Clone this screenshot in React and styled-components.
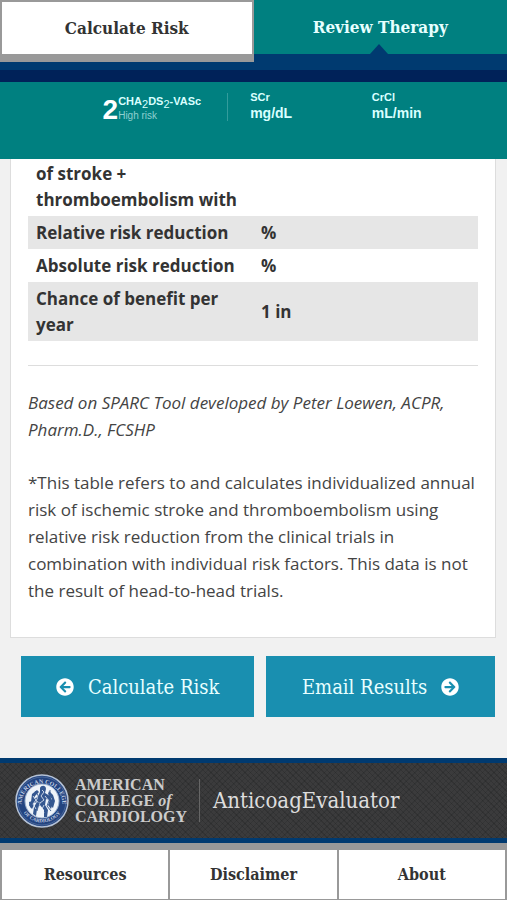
import React from "react";
import styled, { createGlobalStyle } from "styled-components";
import { FaArrowCircleLeft, FaArrowCircleRight } from "react-icons/fa";

const rows = [
  { label: "of stroke + thromboembolism with", value: "" },
  { label: "Relative risk reduction", value: "%" },
  { label: "Absolute risk reduction", value: "%" },
  { label: "Chance of benefit per year", value: "1 in" }
];

const links = ["Resources", "Disclaimer", "About"];

export default function App() {
  return (
    <Page>
      <GlobalStyle />
      <header>
        <Tabs>
          <Tab type="button">Calculate Risk</Tab>
          <Tab type="button" $active>Review Therapy</Tab>
        </Tabs>
        <Stripe />
        <Summary>
          <Score>
            <strong>2</strong>
            <div>
              <h2>CHA<sub>2</sub>DS<sub>2</sub>-VASc</h2>
              <p>High risk</p>
            </div>
          </Score>
          <Measure>
            <h2>SCr</h2>
            <p>mg/dL</p>
          </Measure>
          <Measure>
            <h2>CrCl</h2>
            <p>mL/min</p>
          </Measure>
        </Summary>
      </header>

      <Main>
        <Card>
          <RiskTable>
            <tbody>
              {rows.map((row) => (
                <tr key={row.label}>
                  <th scope="row">{row.label}</th>
                  <td>{row.value}</td>
                </tr>
              ))}
            </tbody>
          </RiskTable>
          <Divider />
          <Note>
            <em>Based on SPARC Tool developed by Peter Loewen, ACPR, Pharm.D., FCSHP</em>
          </Note>
          <Note>
            *This table refers to and calculates individualized annual risk of ischemic
            stroke and thromboembolism using relative risk reduction from the clinical
            trials in combination with individual risk factors. This data is not the
            result of head-to-head trials.
          </Note>
        </Card>
        <Actions>
          <Action type="button">
            <FaArrowCircleLeft size={18} />
            Calculate Risk
          </Action>
          <Action type="button">
            Email Results
            <FaArrowCircleRight size={18} />
          </Action>
        </Actions>
      </Main>

      <footer>
        <Brand>
          <Seal />
          <College>
            AMERICAN<br />
            COLLEGE <em>of</em><br />
            CARDIOLOGY
          </College>
          <AppName>AnticoagEvaluator</AppName>
        </Brand>
        <FooterNav>
          {links.map((link) => (
            <a href="#" key={link}>{link}</a>
          ))}
        </FooterNav>
      </footer>
    </Page>
  );
}

function Seal() {
  return (
    <SealSvg viewBox="0 0 54 54" aria-label="American College of Cardiology seal">
      <defs>
        <path id="sealTop" d="M6.5 30 A20.5 20.5 0 1 1 47.5 30" />
        <path id="sealBottom" d="M6 34 A22.5 22.5 0 0 0 48 34" />
      </defs>
      <circle cx="27" cy="27" r="26" fill="#234480" stroke="#b5c2d6" strokeWidth="1.5" />
      <circle cx="27" cy="27" r="24" fill="none" stroke="#6f88b2" strokeWidth="0.5" />
      <circle cx="27" cy="27" r="17" fill="#eef3f9" stroke="#9eb2cf" />
      <text fill="#c3d0e4" fontSize="6" fontFamily="Liberation Serif, serif" fontWeight="700">
        <textPath href="#sealTop" startOffset="50%" textAnchor="middle">AMERICAN COLLEGE</textPath>
      </text>
      <text fill="#c3d0e4" fontSize="5" fontFamily="Liberation Serif, serif" fontWeight="700">
        <textPath href="#sealBottom" startOffset="50%" textAnchor="middle">OF CARDIOLOGY</textPath>
      </text>
      <g fill="#345790">
        <path d="M25 14c1-3 6-3 6 1l-1 4 5 3 3 6-2 7-3-4 1-5-3-1-1 6 3 5-1 7h-3l0-7-4-5-3 4-1 7-3-2 1-7 3-5-3 1-3 5-2-3 4-6 5-2 2-5z" />
        <path d="M17 20l5-4 2 2-4 4-2 5-2 1zM14 28l3-1 2 4-2 4c-2-2-3-4-3-7zM34 17l4 4 2 6-2 7-2-2 1-7-4-5z" />
      </g>
      <g fill="none" stroke="#edf3fa" strokeWidth="0.8">
        <path d="M27 16l2 2-3 4 3 4-4 3M30 22l4 5-2 5M23 23l-2 4 4 2-2 5M29 31l-2 4 2 4" />
        <path d="M18 22l3 4-3 4 3 5" />
      </g>
      <path d="M20 17l3 4 1 8-2 8M35 16v8l-3 8 4 5" fill="none" stroke="#345790" strokeWidth="0.9" />
    </SealSvg>
  );
}

const slab = `"Roboto Slab", "DejaVu Serif Condensed", "DejaVu Serif", serif`;

const GlobalStyle = createGlobalStyle`
  * {
    box-sizing: border-box;
  }

  body {
    margin: 0;
    background: #f1f1f1;
    color: #333;
    font-family: "Open Sans", "Noto Sans", sans-serif;
  }

  h1, h2, p {
    margin: 0;
  }

  button {
    border: 0;
    cursor: pointer;
  }
`;

const Page = styled.div`
  display: flex;
  flex-direction: column;
  min-height: 100vh;
`;

const Tabs = styled.div`
  display: grid;
  grid-template-columns: 1fr 1fr;
`;

const Tab = styled.button`
  position: relative;
  height: 62px;
  padding: 0;
  font-family: ${slab};
  font-size: 17px;
  font-weight: 700;
  background: ${({ $active }) => ($active ? "#008080" : "#fff")};
  color: ${({ $active }) => ($active ? "#e6ffff" : "#333")};
  border: ${({ $active }) => ($active ? "0" : "2px solid #999")};
  border-bottom: 8px solid ${({ $active }) => ($active ? "#003a70" : "#999")};

  &::after {
    content: "";
    display: ${({ $active }) => ($active ? "block" : "none")};
    position: absolute;
    bottom: 0;
    left: 50%;
    margin-left: -10px;
    border: 9px solid transparent;
    border-top: 0;
    border-bottom: 10px solid #003a70;
  }
`;

const Stripe = styled.div`
  height: 20px;
  background: #002259;
  border-top: 8px solid #003a70;
`;

const Summary = styled.section`
  display: grid;
  grid-template-columns: 45% 24% 1fr;
  height: 77px;
  padding-top: 11px;
  background: #008080;
  color: #d9ffff;
  font-family: "Liberation Sans", Arial, sans-serif;

  h2 {
    font-size: 11px;
    line-height: 12px;
  }
`;

const Score = styled.div`
  display: flex;
  justify-content: flex-end;
  height: 28px;
  padding-right: 26px;
  border-right: 1px solid #339c9c;

  strong {
    color: #fff;
    font-size: 28px;
    line-height: 34px;
  }

  h2 {
    line-height: 16px;
  }

  sub {
    font-size: 11px;
    font-weight: 400;
    line-height: 0;
  }

  p {
    font-size: 10px;
    line-height: 14px;
    color: #8fd0d0;
  }
`;

const Measure = styled.div`
  padding: 0 22px;

  h2 {
    line-height: 8px;
  }

  p {
    font-size: 14px;
    font-weight: 700;
    line-height: 24px;
  }
`;

const Main = styled.main`
  flex: 1;
  padding: 0 11px 41px 10px;
`;

const Card = styled.section`
  padding: 0 17px 33px;
  background: #fff;
  border: 1px solid #ddd;
  border-top: 0;
`;

const RiskTable = styled.table`
  width: 100%;
  border-collapse: collapse;
  font-size: 17px;
  line-height: 26px;
  font-weight: 700;

  th, td {
    padding: 4px 8px 3px;
    text-align: left;
  }

  th {
    width: 50%;
  }

  tr:first-child > * {
    padding-top: 2px;
  }

  tr:nth-child(even) {
    background: #e6e6e6;
  }
`;

const Divider = styled.hr`
  margin: 24px 0 23px;
  border: 0;
  border-top: 1px solid #ddd;
`;

const Note = styled.p`
  color: #444;
  font-size: 17px;
  line-height: 27px;

  & + & {
    margin-top: 26px;
  }
`;

const Actions = styled.div`
  display: grid;
  grid-template-columns: 51fr 50fr;
  gap: 12px;
  padding: 18px 1px 0 11px;
`;

const Action = styled.button`
  display: flex;
  align-items: center;
  justify-content: center;
  gap: 14px;
  height: 61px;
  background: #198fb0;
  color: #e8ffff;
  font-family: ${slab};
  font-size: 20px;

  svg {
    color: #fff;
  }
`;

const Brand = styled.div`
  display: flex;
  align-items: center;
  height: 85px;
  padding-left: 15px;
  border: solid #003a70;
  border-width: 5px 0;
  color: #ddd;
  background:
    repeating-linear-gradient(45deg, transparent 0 3px, rgba(0, 0, 0, 0.14) 3px 4px),
    repeating-linear-gradient(-45deg, #3b3b3c 0 3px, #343536 3px 4px);
`;

const SealSvg = styled.svg`
  width: 54px;
  height: 54px;
  flex: none;
`;

const College = styled.div`
  margin-left: 6px;
  padding-right: 12px;
  font-family: "Liberation Serif", serif;
  font-size: 16px;
  font-weight: 700;
  line-height: 16px;
  color: #ccc;
`;

const AppName = styled.h1`
  padding-left: 13px;
  border-left: 1px solid #666;
  font-family: ${slab};
  font-size: 22px;
  font-weight: 400;
  line-height: 43px;
`;

const FooterNav = styled.nav`
  display: grid;
  grid-template-columns: repeat(3, 1fr);
  gap: 2px;
  padding: 7px 2px 1px;
  background: #999;

  a {
    background: #fff;
    color: #333;
    font-family: ${slab};
    font-size: 16px;
    font-weight: 700;
    line-height: 49px;
    text-align: center;
    text-decoration: none;
  }
`;
